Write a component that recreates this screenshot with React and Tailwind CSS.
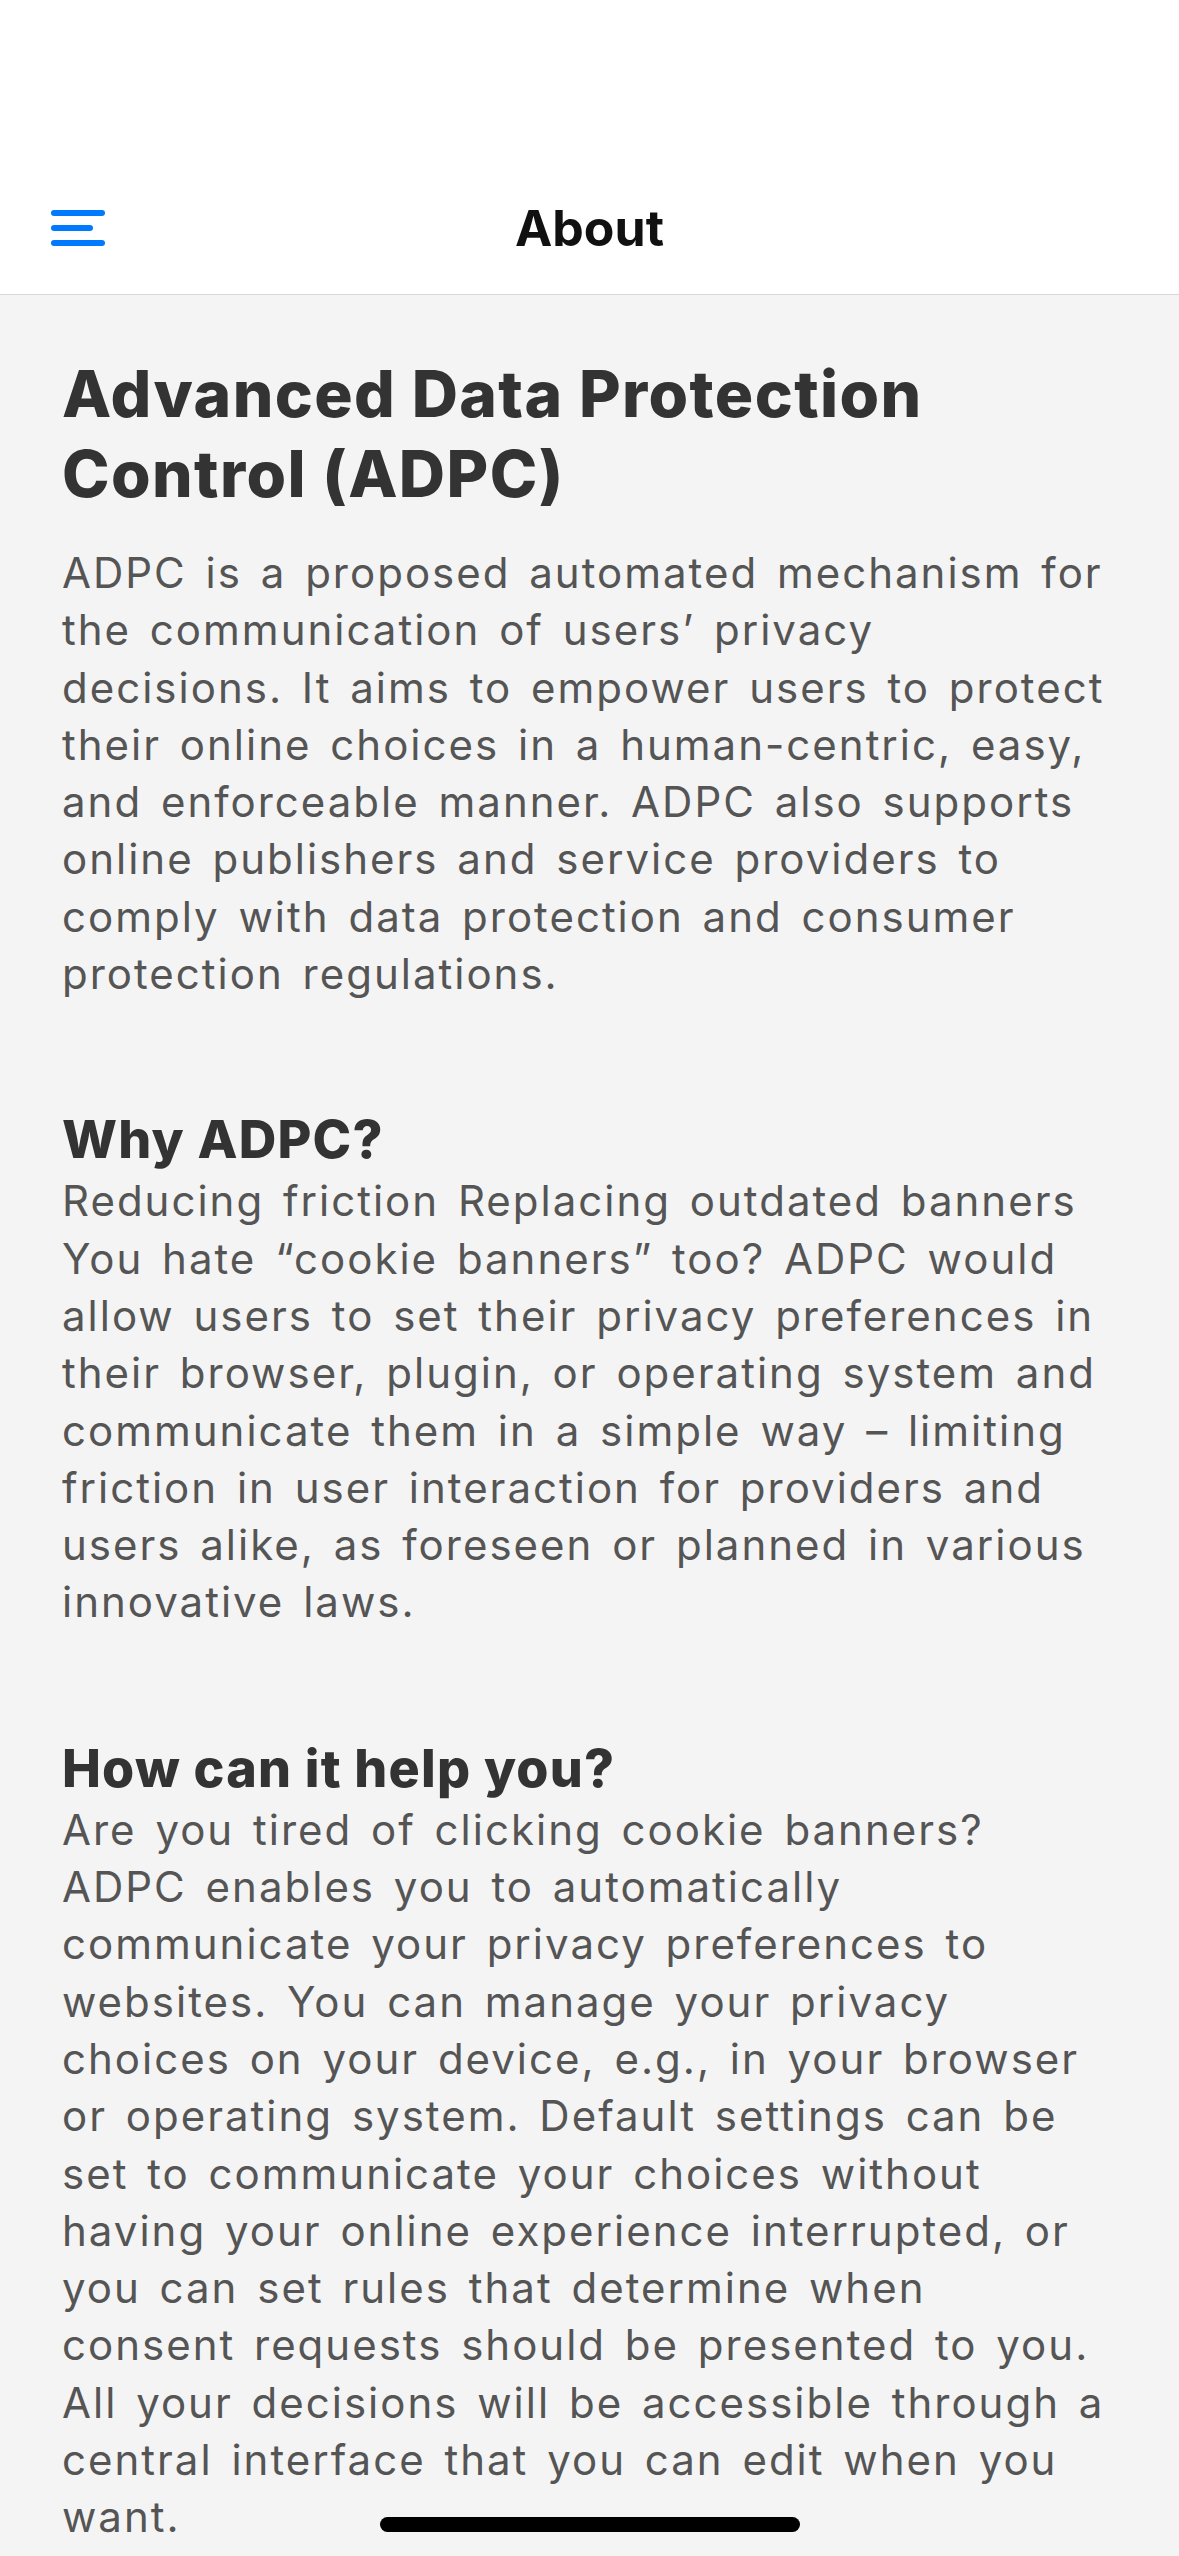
import React from 'react';

const intro = [
  'ADPC is a proposed automated mechanism for',
  'the communication of users’ privacy',
  'decisions. It aims to empower users to protect',
  'their online choices in a human-centric, easy,',
  'and enforceable manner. ADPC also supports',
  'online publishers and service providers to',
  'comply with data protection and consumer',
  'protection regulations.',
];

const sections = [
  {
    title: 'Why ADPC?',
    lines: [
      'Reducing friction Replacing outdated banners',
      'You hate “cookie banners” too? ADPC would',
      'allow users to set their privacy preferences in',
      'their browser, plugin, or operating system and',
      'communicate them in a simple way – limiting',
      'friction in user interaction for providers and',
      'users alike, as foreseen or planned in various',
      'innovative laws.',
    ],
  },
  {
    title: 'How can it help you?',
    lines: [
      'Are you tired of clicking cookie banners?',
      'ADPC enables you to automatically',
      'communicate your privacy preferences to',
      'websites. You can manage your privacy',
      'choices on your device, e.g., in your browser',
      'or operating system. Default settings can be',
      'set to communicate your choices without',
      'having your online experience interrupted, or',
      'you can set rules that determine when',
      'consent requests should be presented to you.',
      'All your decisions will be accessible through a',
      'central interface that you can edit when you',
      'want.',
    ],
  },
];

const font = { fontFamily: 'Inter, "Noto Sans", sans-serif' };

const Paragraph = ({ lines }) => (
  <p className="text-[42px] leading-[57.3px] text-[#555] tracking-[2px] [word-spacing:5px]">
    {lines.map((l, i) => (
      <span key={i} className="block whitespace-nowrap">{l}</span>
    ))}
  </p>
);

const App = () => {
  return (
    <div className="relative h-[2556px] overflow-hidden bg-[#f4f4f4]" style={font}>
      {/* nav bar */}
      <header className="bg-white pt-[162px] border-b border-[#d8d8d8]">
        <div className="grid grid-cols-[1fr_auto_1fr] items-center h-[132px]">
          <div className="pl-[51px] flex flex-col gap-[9px]">
            <span className="block w-[54px] h-[6px] rounded-full bg-[#007aff]" />
            <span className="block w-[42px] h-[6px] rounded-full bg-[#007aff]" />
            <span className="block w-[54px] h-[6px] rounded-full bg-[#007aff]" />
          </div>
          <h1 className="text-[50px] font-bold text-[#111]">About</h1>
          <div />
        </div>
      </header>

      <main className="px-[62px] pt-[59px]">
        <h2 className="text-[64px] leading-[80px] font-extrabold text-[#333] tracking-[1.4px]">
          Advanced Data Protection<br />Control (ADPC)
        </h2>
        <div className="mt-[30px]">
          <Paragraph lines={intro} />
        </div>

        {sections.map((s) => (
          <section key={s.title} className="mt-[109px]">
            <h3 className="text-[52px] leading-[57px] font-extrabold text-[#333] tracking-[1.2px] mb-[4px]">{s.title}</h3>
            <Paragraph lines={s.lines} />
          </section>
        ))}
      </main>

      {/* home indicator */}
      <div className="absolute bottom-[24px] left-1/2 -translate-x-1/2 w-[420px] h-[15px] rounded-full bg-black" />
    </div>
  );
};

export default App;
